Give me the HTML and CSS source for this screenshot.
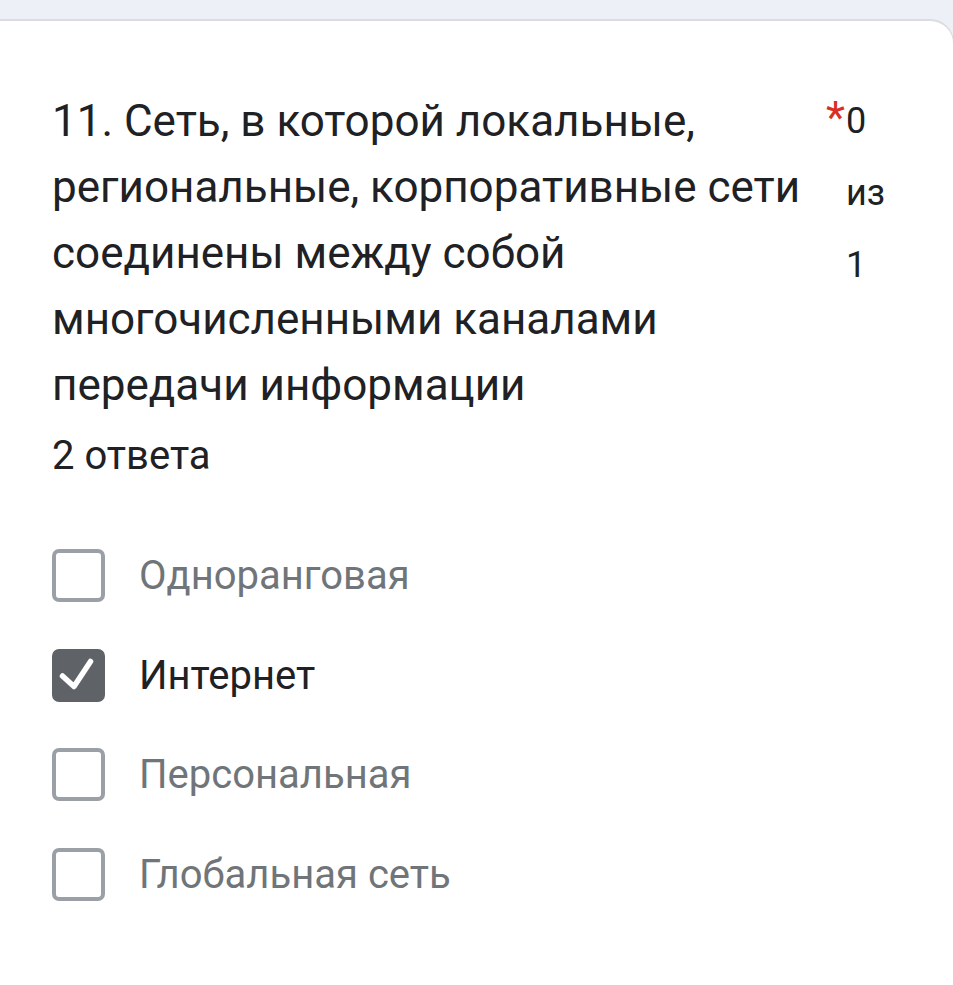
FILE: index.html
```html
<!DOCTYPE html>
<html lang="ru">
<head>
<meta charset="utf-8">
<link rel="stylesheet" href="styles.css">
</head>
<body>
<div class="card">
  <div class="head">
    <div class="title">11. Сеть, в которой локальные, региональные, корпоративные сети соединены между собой многочисленными каналами передачи информации</div>
    <div class="points">
      <span class="star">*</span>
      <div class="score">0 из 1</div>
    </div>
  </div>
  <div class="answers">2 ответа</div>
  <ul class="options">
    <li class="opt"><span class="box"></span><span class="label">Одноранговая</span></li>
    <li class="opt checked"><span class="box"><svg viewBox="0 0 52 52" width="52" height="52"><polyline points="9.5,27 21,37.5 37.5,12.5" fill="none" stroke="#fff" stroke-width="5.5" stroke-linecap="round" stroke-linejoin="round"/></svg></span><span class="label">Интернет</span></li>
    <li class="opt"><span class="box"></span><span class="label">Персональная</span></li>
    <li class="opt"><span class="box"></span><span class="label">Глобальная сеть</span></li>
  </ul>
</div>
</body>
</html>
```

FILE: styles.css
```css
html, body {
  margin: 0;
  padding: 0;
}
body {
  background: #eef0f7;
  font-family: Roboto, "Noto Sans", Arial, sans-serif;
  height: 985px;
  overflow: hidden;
}
.card {
  margin-top: 19px;
  margin-left: -30px;
  margin-right: -1px;
  background: #ffffff;
  border-top: 2px solid #dadce0;
  border-right: 1px solid #dadce0;
  border-top-right-radius: 24px;
  padding: 67px 0 0 82px;
  height: 1000px;
  box-sizing: border-box;
}
.head {
  display: flex;
  align-items: flex-start;
}
.title {
  width: 760px;
  font-size: 44px;
  line-height: 66px;
  color: #202124;
}
.points {
  display: flex;
  align-items: baseline;
  margin-left: 14px;
  margin-top: -3px;
  font-size: 36px;
  line-height: 72px;
}
.star {
  color: #d93025;
  font-size: 44px;
  line-height: 44px;
  width: 20px;
}
.score {
  width: 45px;
  color: #202124;
}
.answers {
  font-size: 40px;
  line-height: 66px;
  color: #202124;
  margin-top: 5px;
}
.options {
  list-style: none;
  margin: 37px 0 0 0;
  padding: 0;
}
.opt {
  display: flex;
  align-items: center;
  height: 99.5px;
}
.box {
  width: 53px;
  height: 53px;
  box-sizing: border-box;
  border: 4px solid #9aa0a6;
  border-radius: 7px;
  flex: none;
  display: flex;
  align-items: center;
  justify-content: center;
}
.checked .box {
  background: #5f6368;
  border-color: #5f6368;
}
.box svg {
  display: block;
  flex: none;
}
.label {
  margin-left: 34px;
  font-size: 40px;
  color: #70757a;
}
.checked .label {
  color: #202124;
}
```
